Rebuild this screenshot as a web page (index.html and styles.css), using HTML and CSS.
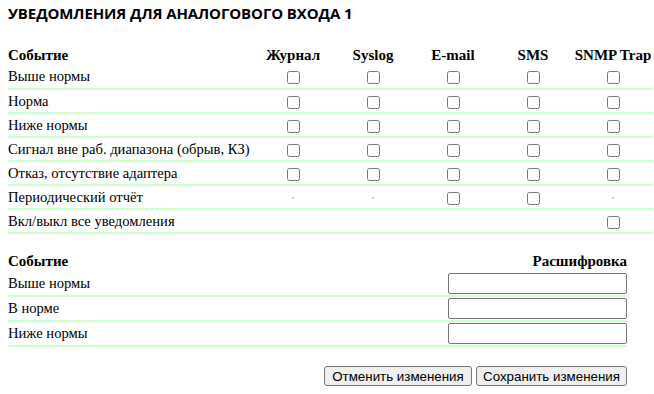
FILE: index.html
```html
<!DOCTYPE html>
<html lang="ru">
<head>
<meta charset="utf-8">
<link rel="stylesheet" href="styles.css">
</head>
<body>
<h1 class="title">УВЕДОМЛЕНИЯ ДЛЯ АНАЛОГОВОГО ВХОДА 1</h1>
<table class="notify">
  <colgroup><col class="c-event"><col class="c-ch"><col class="c-ch"><col class="c-ch"><col class="c-ch"><col class="c-ch"></colgroup>
  <thead>
    <tr><th class="left">Событие</th><th>Журнал</th><th>Syslog</th><th>E-mail</th><th>SMS</th><th>SNMP Trap</th></tr>
  </thead>
  <tbody>
    <tr><td class="left">Выше нормы</td><td><input type="checkbox"></td><td><input type="checkbox"></td><td><input type="checkbox"></td><td><input type="checkbox"></td><td><input type="checkbox"></td></tr>
    <tr><td class="left">Норма</td><td><input type="checkbox"></td><td><input type="checkbox"></td><td><input type="checkbox"></td><td><input type="checkbox"></td><td><input type="checkbox"></td></tr>
    <tr><td class="left">Ниже нормы</td><td><input type="checkbox"></td><td><input type="checkbox"></td><td><input type="checkbox"></td><td><input type="checkbox"></td><td><input type="checkbox"></td></tr>
    <tr><td class="left">Сигнал вне раб. диапазона (обрыв, КЗ)</td><td><input type="checkbox"></td><td><input type="checkbox"></td><td><input type="checkbox"></td><td><input type="checkbox"></td><td><input type="checkbox"></td></tr>
    <tr><td class="left">Отказ, отсутствие адаптера</td><td><input type="checkbox"></td><td><input type="checkbox"></td><td><input type="checkbox"></td><td><input type="checkbox"></td><td><input type="checkbox"></td></tr>
    <tr><td class="left">Периодический отчёт</td><td><span class="dot"></span></td><td><span class="dot"></span></td><td><input type="checkbox"></td><td><input type="checkbox"></td><td><span class="dot"></span></td></tr>
    <tr><td class="left">Вкл/выкл все уведомления</td><td></td><td></td><td></td><td></td><td><input type="checkbox"></td></tr>
  </tbody>
</table>
<table class="decode">
  <thead>
    <tr><th class="left">Событие</th><th class="right">Расшифровка</th></tr>
  </thead>
  <tbody>
    <tr><td class="left">Выше нормы</td><td class="right"><input type="text" class="field"></td></tr>
    <tr><td class="left">В норме</td><td class="right"><input type="text" class="field"></td></tr>
    <tr><td class="left">Ниже нормы</td><td class="right"><input type="text" class="field"></td></tr>
  </tbody>
</table>
<div class="actions">
  <button type="button" class="btn btn-cancel">Отменить изменения</button>
  <button type="button" class="btn btn-save">Сохранить изменения</button>
</div>
</body>
</html>
```
FILE: styles.css
```css
html, body {
  margin: 0;
  background: #fff;
}
body {
  padding: 3px 8px 8px;
  font-family: "Liberation Serif", "Times New Roman", serif;
  font-size: 15px;
  color: #000;
}
.title {
  margin: 0;
  font-family: "Open Sans", sans-serif;
  font-weight: 700;
  font-size: 15px;
  line-height: 20px;
  letter-spacing: -0.1px;
}
table {
  border-collapse: collapse;
  border-spacing: 0;
}
.notify {
  margin-top: 22px;
  table-layout: fixed;
  width: 645px;
}
.c-event { width: 245px; }
.c-ch { width: 80px; }
th, td {
  padding: 0;
  text-align: center;
  vertical-align: middle;
  font-family: "Liberation Serif", "Times New Roman", serif;
  font-size: 15px;
  white-space: nowrap;
}
th { font-weight: 700; }
td { font-weight: 400; font-size: 14.6px; }
.left { text-align: left; }
.right { text-align: right; }
.notify thead tr { height: 20px; }
.notify tbody tr { height: 24px; }
.notify tbody td { border-bottom: 2px solid #ccffcc; }
.notify input[type="checkbox"] {
  margin: 0;
  width: 13px;
  height: 13px;
  vertical-align: middle;
}
.dot {
  display: inline-block;
  width: 2px;
  height: 2px;
  background: #d0d0d0;
  vertical-align: middle;
}
.decode {
  margin-top: 18px;
  width: 619px;
}
.decode thead tr { height: 19px; }
.decode tbody tr { height: 25px; }
.decode tbody td { border-bottom: 2px solid #ccffcc; }
.field {
  box-sizing: border-box;
  width: 179px;
  height: 21px;
  margin: 0;
  vertical-align: middle;
  border: 1px solid #767676;
  border-radius: 2px;
  font-family: "Liberation Sans", Arial, sans-serif;
  font-size: 13px;
}
.actions {
  width: 619px;
  margin-top: 19px;
  display: flex;
  justify-content: flex-end;
  gap: 4px;
}
.btn {
  box-sizing: border-box;
  font-family: "Liberation Sans", Arial, sans-serif;
  font-size: 13.33px;
  height: 20px;
  padding: 0 4px;
  border: 1px solid #767676;
  border-radius: 3px;
  background: #efefef;
  color: #000;
}
.btn-cancel { width: 148px; }
.btn-save { width: 151px; }
```
